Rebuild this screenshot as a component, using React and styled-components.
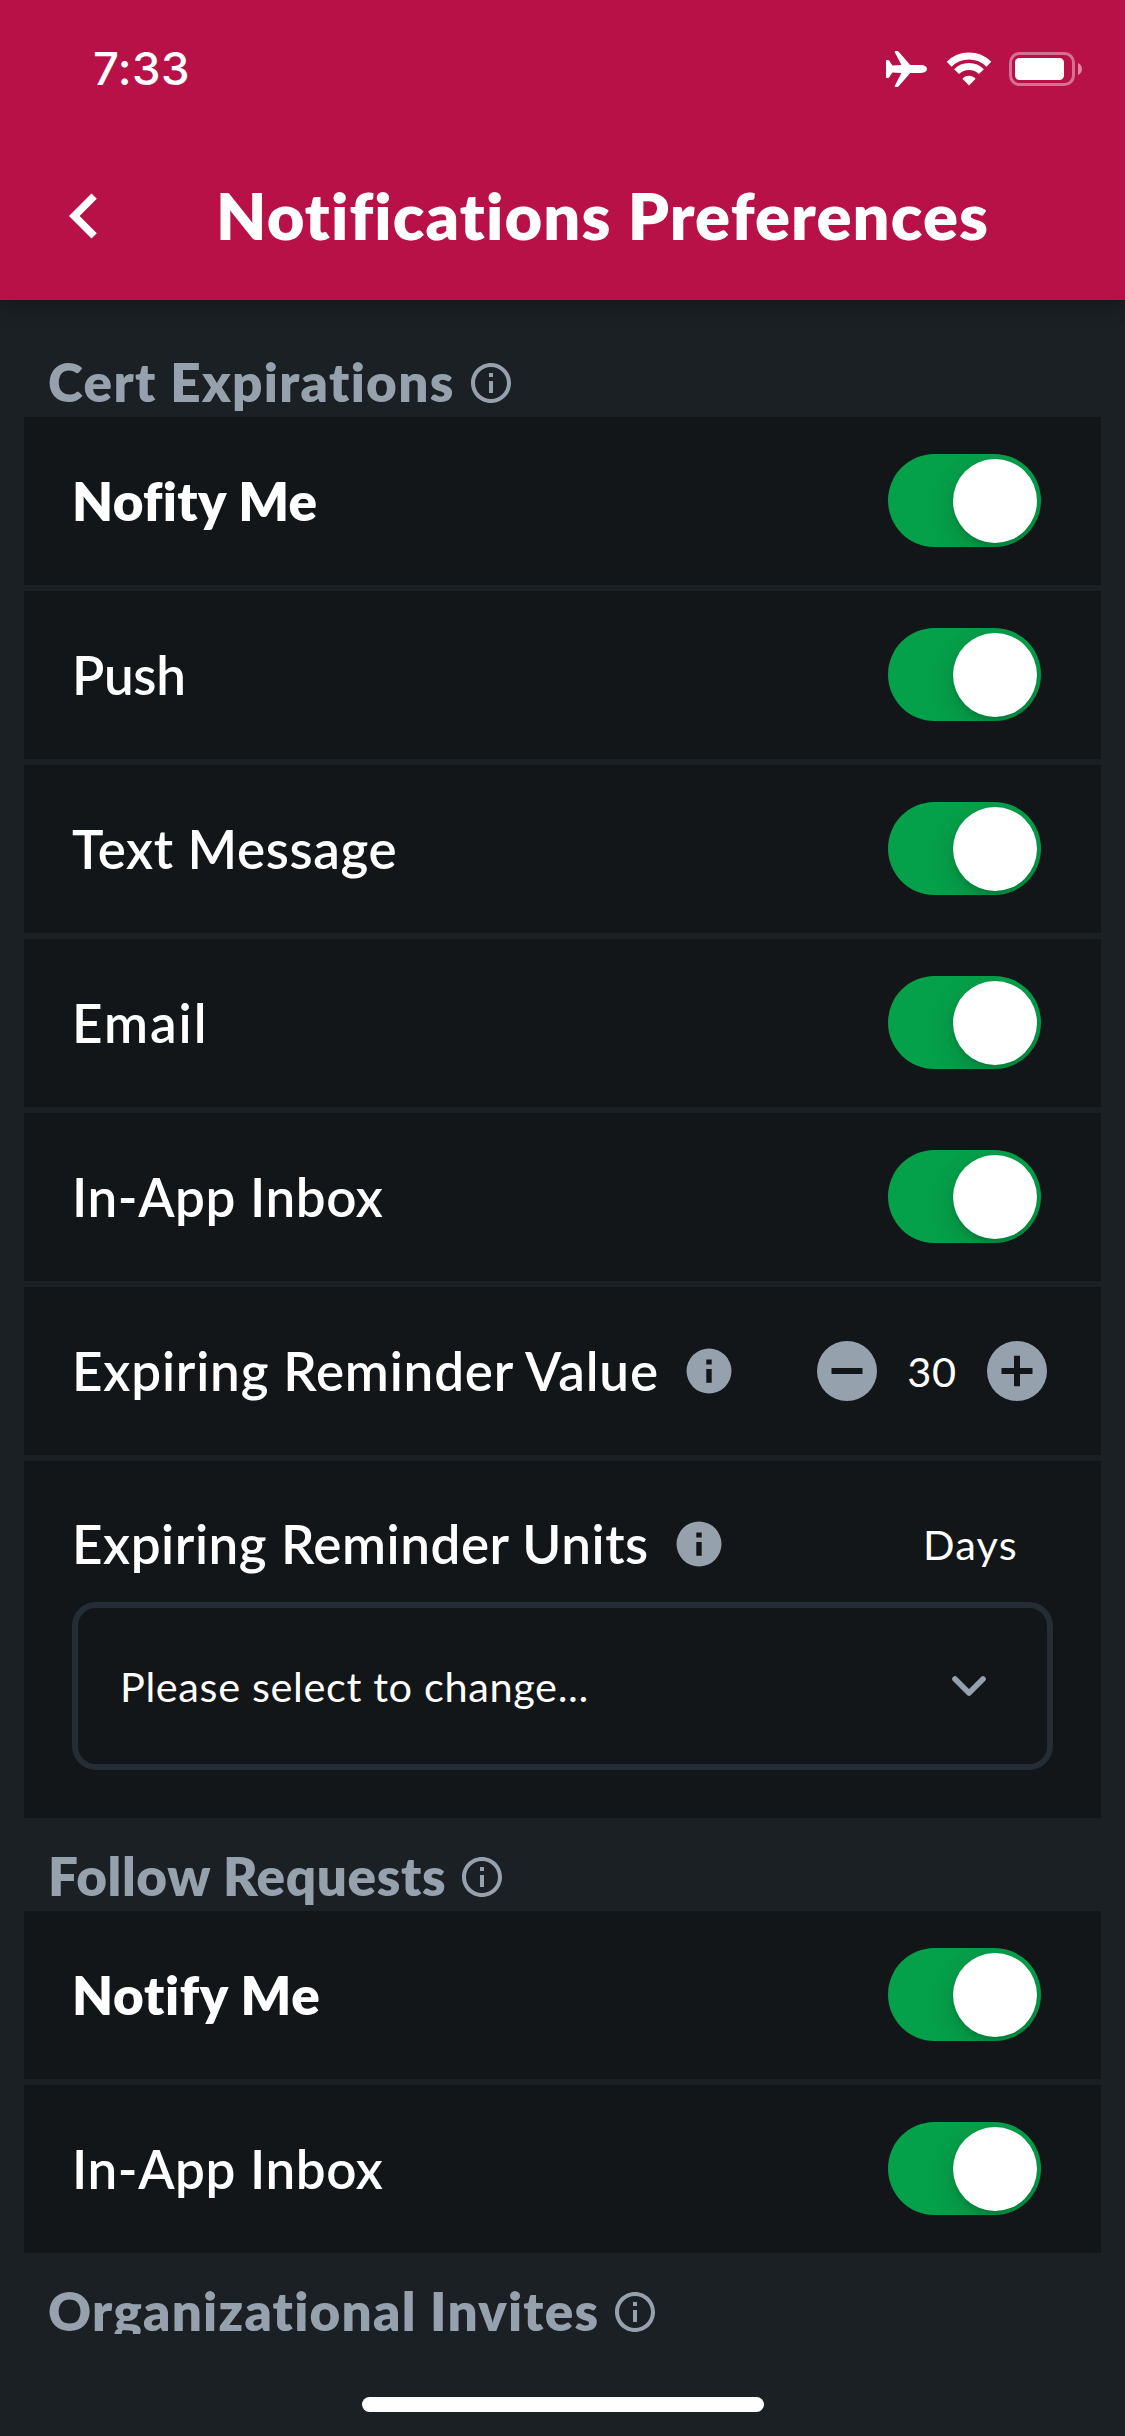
import React, { useState } from "react";
import styled, { createGlobalStyle } from "styled-components";

const color = {
  brand: "#b81147",
  page: "#1b2024",
  card: "#121618",
  muted: "#96a1ae",
  outline: "#262c34",
  on: "#05a04a",
};

const GlobalStyle = createGlobalStyle`
  *, *::before, *::after { box-sizing: border-box; }
  html, body { margin: 0; padding: 0; background: ${color.page}; }
  body { font-family: Lato, "Open Sans", sans-serif; color: #fff; }
  button { font: inherit; color: inherit; background: none; border: 0; padding: 0; margin: 0; }
  svg { display: block; flex: none; }
`;

const Screen = styled.div`
  width: 1125px;
  height: 2436px;
  display: flex;
  flex-direction: column;
  background: ${color.page};
  overflow: hidden;
`;

const Header = styled.header`
  flex: none;
  height: 300px;
  background: ${color.brand};
  box-shadow: 0 4px 20px rgba(0, 0, 0, 0.3);
  z-index: 1;
`;

const StatusBar = styled.div`
  height: 132px;
  padding: 6px 43px 0 93px;
  display: flex;
  align-items: center;
  justify-content: space-between;
`;

const Time = styled.span`
  font-family: Inter, sans-serif;
  font-size: 45.5px;
  font-weight: 550;
  line-height: 54px;
  letter-spacing: ${(p) => p.$tracking}px;
`;

const StatusIcons = styled.div`
  display: flex;
  align-items: center;
`;

const WifiSlot = styled.div`
  margin: 0 17px 0 19px;
`;

const TitleBar = styled.div`
  height: 166px;
  display: flex;
  align-items: center;
`;

const BackButton = styled.button`
  margin: 2px 87px 0 39px;
`;

const Title = styled.h1`
  margin: 0;
  font-size: 65px;
  font-weight: 800;
  line-height: 78px;
  letter-spacing: ${(p) => p.$tracking}px;
  white-space: nowrap;
`;

const ScrollArea = styled.main`
  flex: none;
  height: 2034px;
  padding: 24px 24px 0;
  overflow: hidden;
`;

const SectionHeading = styled.h2`
  height: 93px;
  margin: 0;
  padding: 22px 0 0 24px;
  display: flex;
  align-items: center;
  gap: 12px;
  color: ${color.muted};
  font-size: 53px;
  font-weight: 800;
  line-height: 70px;
  letter-spacing: ${(p) => p.$tracking}px;
  white-space: nowrap;

  svg { margin-top: 2px; }
`;

const Rows = styled.div`
  display: flex;
  flex-direction: column;
  gap: 6px;
  width: 1077px;
`;

const Row = styled.div`
  height: 168px;
  padding: 0 ${(p) => p.$right || 60}px 0 48px;
  display: flex;
  align-items: center;
  justify-content: space-between;
  background: ${color.card};
`;

const SelectRow = styled.div`
  height: 357px;
  padding: 53px 48px 48px;
  background: ${color.card};
`;

const SelectHead = styled.div`
  height: 60px;
  margin-bottom: 28px;
  padding-right: 35px;
  display: flex;
  align-items: center;
  justify-content: space-between;
`;

const LabelGroup = styled.div`
  display: flex;
  align-items: center;
  gap: 23px;
`;

const Label = styled.span`
  font-size: 53px;
  font-weight: ${(p) => (p.$strong ? 800 : 600)};
  line-height: 64px;
  letter-spacing: ${(p) => p.$tracking}px;
  white-space: nowrap;
`;

const Value = styled.span`
  font-size: 41.5px;
  font-weight: 400;
  line-height: 50px;
  letter-spacing: ${(p) => p.$tracking || 0.62}px;
`;

const Stepper = styled.div`
  width: 230px;
  display: flex;
  align-items: center;
  justify-content: space-between;
`;

const Track = styled.button`
  width: 153px;
  height: 93px;
  margin-bottom: 1px;
  padding: 4.5px;
  display: flex;
  justify-content: ${(p) => (p.$on ? "flex-end" : "flex-start")};
  align-items: center;
  border-radius: 47px;
  background: ${(p) => (p.$on ? color.on : "#39393d")};
  overflow: hidden;
`;

const Thumb = styled.span`
  width: 84px;
  height: 84px;
  border-radius: 50%;
  background: #fff;
  box-shadow: 0 9px 24px rgba(0, 0, 0, 0.17), 0 3px 4px rgba(0, 0, 0, 0.1);
`;

const SelectBox = styled.div`
  width: 981px;
  height: 168px;
  padding: 0 60px 0 42px;
  display: flex;
  align-items: center;
  justify-content: space-between;
  border: 6px solid ${color.outline};
  border-radius: 24px;
`;

const HomeBar = styled.div`
  width: 402px;
  height: 15px;
  margin: 63px auto 0;
  border-radius: 8px;
  background: #fff;
`;

function Plane() {
  return (
    <svg width="41" height="36" viewBox="0 0 41 36" fill="#fff">
      <path d="M0.6 9H1.8Q2.8 9 3.4 9.9L6.4 14.6L15.4 14L8.8 1.3Q8.3 0 9.5 0H11.3Q12.1 0 12.7 .8L24.2 14.1H35C38.6 14.1 41 16 41 18S38.6 21.9 35 21.9H24.2L12.7 35.2Q12.1 36 11.3 36H9.5Q8.3 36 8.8 34.7L15.4 22L6.4 21.4L3.4 26.1Q2.8 27 1.8 27H.6Q0 27 0 26.4V9.6Q0 9 .6 9Z" />
    </svg>
  );
}

function Wifi() {
  return (
    <svg width="46" height="34" viewBox="0 0 46 34" fill="none" stroke="#fff" strokeWidth="7">
      <path d="M3.2 12.2A28 28 0 0 1 42.8 12.2" />
      <path d="M10.6 19.6A17.5 17.5 0 0 1 35.4 19.6" />
      <path d="M23 33.4L16.9 27.3Q16.3 26.6 17 26A9.4 9.4 0 0 1 29 26Q29.7 26.6 29.1 27.3Z" fill="#fff" stroke="none" />
    </svg>
  );
}

function Battery() {
  return (
    <svg width="73" height="34" viewBox="0 0 73 34" fill="#fff">
      <rect x="1.5" y="1.5" width="63" height="31" rx="9" fill="none" stroke="#fff" strokeWidth="3" opacity=".4" />
      <rect x="6" y="6" width="49" height="22" rx="4.5" />
      <path d="M69 11C71.5 12.2 73 14.5 73 17S71.5 21.8 69 23Z" opacity=".5" />
    </svg>
  );
}

function InfoOutline() {
  return (
    <svg width="48" height="48" viewBox="0 0 24 24" fill={color.muted}>
      <path d="M11 7h2v2h-2zm0 4h2v6h-2zm1-9C6.48 2 2 6.48 2 12s4.48 10 10 10 10-4.48 10-10S17.52 2 12 2zm0 18c-4.41 0-8-3.59-8-8s3.59-8 8-8 8 3.59 8 8-3.59 8-8 8z" />
    </svg>
  );
}

function InfoFilled() {
  return (
    <svg width="54" height="54" viewBox="0 0 24 24">
      <circle cx="12" cy="12" r="10" fill={color.muted} />
      <path d="M10.8 6.9h2.4v2.2h-2.4zM10.8 11.1h2.4v6.1h-2.4z" fill={color.card} />
    </svg>
  );
}

function StepIcon({ plus }) {
  return (
    <svg width="60" height="60" viewBox="0 0 60 60">
      <circle cx="30" cy="30" r="30" fill={color.muted} />
      <path d={plus ? "M14.5 30H45.5M30 14.8V45.2" : "M14.5 30H45.5"} stroke={color.card} strokeWidth="6" />
    </svg>
  );
}

function ToggleRow({ label, tracking, strong }) {
  const [on, setOn] = useState(true);
  return (
    <Row>
      <Label $strong={strong} $tracking={tracking}>{label}</Label>
      <Track $on={on} role="switch" aria-checked={on} aria-label={label} onClick={() => setOn(!on)}>
        <Thumb />
      </Track>
    </Row>
  );
}

function Heading({ children, tracking }) {
  return (
    <SectionHeading $tracking={tracking}>
      <span>{children}</span>
      <InfoOutline />
    </SectionHeading>
  );
}

export default function App() {
  const [days, setDays] = useState(30);
  return (
    <Screen>
      <GlobalStyle />
      <Header>
        <StatusBar>
          <Time $tracking={0.4}>7:33</Time>
          <StatusIcons>
            <Plane />
            <WifiSlot><Wifi /></WifiSlot>
            <Battery />
          </StatusIcons>
        </StatusBar>
        <TitleBar>
          <BackButton aria-label="Back">
            <svg width="90" height="90" viewBox="0 0 24 24" fill="#fff">
              <path d="M15.41 7.41 14 6l-6 6 6 6 1.41-1.41L10.83 12z" />
            </svg>
          </BackButton>
          <Title $tracking={1.13}>Notifications Preferences</Title>
        </TitleBar>
      </Header>

      <ScrollArea>
        <Heading tracking={1.33}>Cert Expirations</Heading>
        <Rows>
          <ToggleRow label="Nofity Me" tracking={0.35} strong />
          <ToggleRow label="Push" tracking={-0.3} />
          <ToggleRow label="Text Message" tracking={0.6} />
          <ToggleRow label="Email" tracking={2} />
          <ToggleRow label="In-App Inbox" tracking={0.6} />
          <Row $right={54}>
            <LabelGroup>
              <Label $tracking={0.8}>Expiring Reminder Value</Label>
              <InfoFilled />
            </LabelGroup>
            <Stepper>
              <button aria-label="Decrease" onClick={() => setDays(days - 1)}><StepIcon /></button>
              <Value>{days}</Value>
              <button aria-label="Increase" onClick={() => setDays(days + 1)}><StepIcon plus /></button>
            </Stepper>
          </Row>
          <SelectRow>
            <SelectHead>
              <LabelGroup>
                <Label $tracking={0.54}>Expiring Reminder Units</Label>
                <InfoFilled />
              </LabelGroup>
              <Value $tracking={1.2}>Days</Value>
            </SelectHead>
            <SelectBox>
              <Value>Please select to change...</Value>
              <svg width="36" height="24" viewBox="0 0 36 24" fill="none" stroke={color.muted} strokeWidth="5.6" strokeLinecap="round" strokeLinejoin="round">
                <path d="M4 5L18 19L32 5" />
              </svg>
            </SelectBox>
          </SelectRow>
        </Rows>

        <Heading tracking={0.6}>Follow Requests</Heading>
        <Rows>
          <ToggleRow label="Notify Me" tracking={0.65} strong />
          <ToggleRow label="In-App Inbox" tracking={0.6} />
        </Rows>

        <Heading tracking={1.22}>Organizational Invites</Heading>
      </ScrollArea>
      <HomeBar />
    </Screen>
  );
}
